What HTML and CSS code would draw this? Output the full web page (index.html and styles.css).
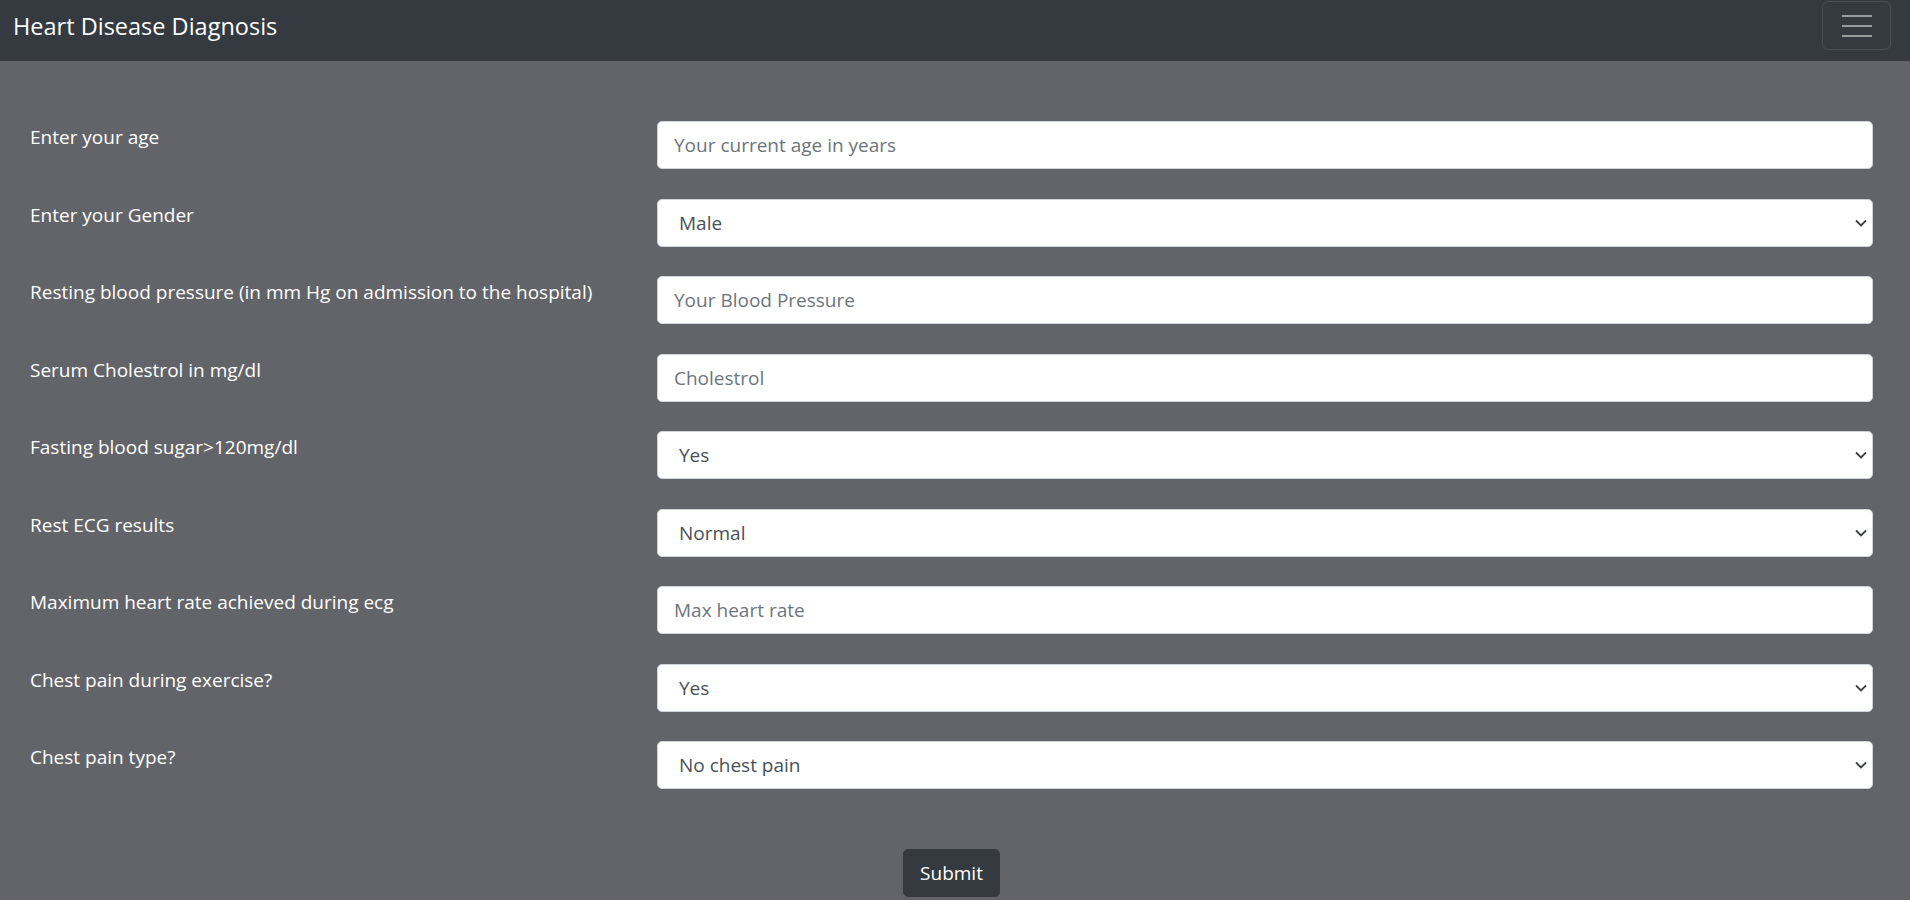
FILE: index.html
```html
<!DOCTYPE html>
<html lang="en">
<head>
<meta charset="utf-8">
<title>Heart Disease Diagnosis</title>
<link rel="stylesheet" href="styles.css">
</head>
<body>
<nav class="navbar">
  <a class="brand" href="#">Heart Disease Diagnosis</a>
  <button class="toggler" type="button" aria-label="Toggle navigation">
    <svg class="toggler-icon" width="30" height="22" viewBox="0 0 30 22">
      <path d="M0 1h30M0 11h30M0 21h30" stroke="rgba(255,255,255,0.5)" stroke-width="2.2"/>
    </svg>
  </button>
</nav>

<form class="form">
  <div class="row">
    <label class="label">Enter your age</label>
    <input class="control" type="text" placeholder="Your current age in years">
  </div>
  <div class="row">
    <label class="label">Enter your Gender</label>
    <div class="select-wrap">
      <select class="control select"><option>Male</option><option>Female</option></select>
      <svg class="chevron" width="12" height="8" viewBox="0 0 12 8"><path d="M1 1.5l5 5 5-5" fill="none" stroke="#3d4147" stroke-width="1.8"/></svg>
    </div>
  </div>
  <div class="row">
    <label class="label">Resting blood pressure (in mm Hg on admission to the hospital)</label>
    <input class="control" type="text" placeholder="Your Blood Pressure">
  </div>
  <div class="row">
    <label class="label">Serum Cholestrol in mg/dl</label>
    <input class="control" type="text" placeholder="Cholestrol">
  </div>
  <div class="row">
    <label class="label">Fasting blood sugar&gt;120mg/dl</label>
    <div class="select-wrap">
      <select class="control select"><option>Yes</option><option>No</option></select>
      <svg class="chevron" width="12" height="8" viewBox="0 0 12 8"><path d="M1 1.5l5 5 5-5" fill="none" stroke="#3d4147" stroke-width="1.8"/></svg>
    </div>
  </div>
  <div class="row">
    <label class="label">Rest ECG results</label>
    <div class="select-wrap">
      <select class="control select"><option>Normal</option></select>
      <svg class="chevron" width="12" height="8" viewBox="0 0 12 8"><path d="M1 1.5l5 5 5-5" fill="none" stroke="#3d4147" stroke-width="1.8"/></svg>
    </div>
  </div>
  <div class="row">
    <label class="label">Maximum heart rate achieved during ecg</label>
    <input class="control" type="text" placeholder="Max heart rate">
  </div>
  <div class="row">
    <label class="label">Chest pain during exercise?</label>
    <div class="select-wrap">
      <select class="control select"><option>Yes</option><option>No</option></select>
      <svg class="chevron" width="12" height="8" viewBox="0 0 12 8"><path d="M1 1.5l5 5 5-5" fill="none" stroke="#3d4147" stroke-width="1.8"/></svg>
    </div>
  </div>
  <div class="row">
    <label class="label">Chest pain type?</label>
    <div class="select-wrap">
      <select class="control select"><option>No chest pain</option></select>
      <svg class="chevron" width="12" height="8" viewBox="0 0 12 8"><path d="M1 1.5l5 5 5-5" fill="none" stroke="#3d4147" stroke-width="1.8"/></svg>
    </div>
  </div>
  <div class="actions">
    <button class="submit" type="submit">Submit</button>
  </div>
</form>
</body>
</html>
```

FILE: styles.css
```css
* { box-sizing: border-box; }

html, body {
  margin: 0;
  padding: 0;
}

body {
  background: #636469;
  font-family: "Open Sans", "Noto Sans", "DejaVu Sans", sans-serif;
  color: #fff;
  overflow: hidden;
}

.navbar {
  height: 61px;
  background: #343a40;
  display: flex;
  justify-content: space-between;
  align-items: flex-start;
  padding: 0 19px 0 13px;
}

.brand {
  color: #fff;
  text-decoration: none;
  font-size: 23.5px;
  line-height: 36px;
  margin-top: 8px;
  white-space: nowrap;
}

.toggler {
  margin-top: 1px;
  width: 69px;
  height: 49px;
  background: transparent;
  border: 1px solid rgba(255, 255, 255, 0.1);
  border-radius: 6px;
  padding: 0;
  display: flex;
  align-items: center;
  justify-content: center;
}

.toggler-icon { display: block; }

.form {
  padding: 60px 37px 0 30px;
}

.row {
  display: grid;
  grid-template-columns: 627px 1fr;
  margin-bottom: 29.5px;
}

.label {
  font-size: 19px;
  line-height: 30px;
  padding-top: 1px;
  color: #fff;
}

.control {
  display: block;
  width: 100%;
  height: 48px;
  padding: 8px 16px;
  font-family: inherit;
  font-size: 19px;
  line-height: 30px;
  color: #495057;
  background: #fff;
  border: 1px solid #ced4da;
  border-radius: 5px;
  outline: none;
}

.control::placeholder { color: #6c757d; opacity: 1; }

.select-wrap { position: relative; }

.select {
  appearance: none;
  -webkit-appearance: none;
  padding-left: 21px;
  padding-right: 40px;
}

.chevron {
  position: absolute;
  right: 6px;
  top: 20px;
  pointer-events: none;
}

.actions {
  text-align: center;
  padding-top: 30.5px;
}

.submit {
  height: 48px;
  padding: 8px 16px;
  font-family: inherit;
  font-size: 19px;
  line-height: 30px;
  color: #fff;
  background: #343a40;
  border: 1px solid #343a40;
  border-radius: 5px;
}
```
